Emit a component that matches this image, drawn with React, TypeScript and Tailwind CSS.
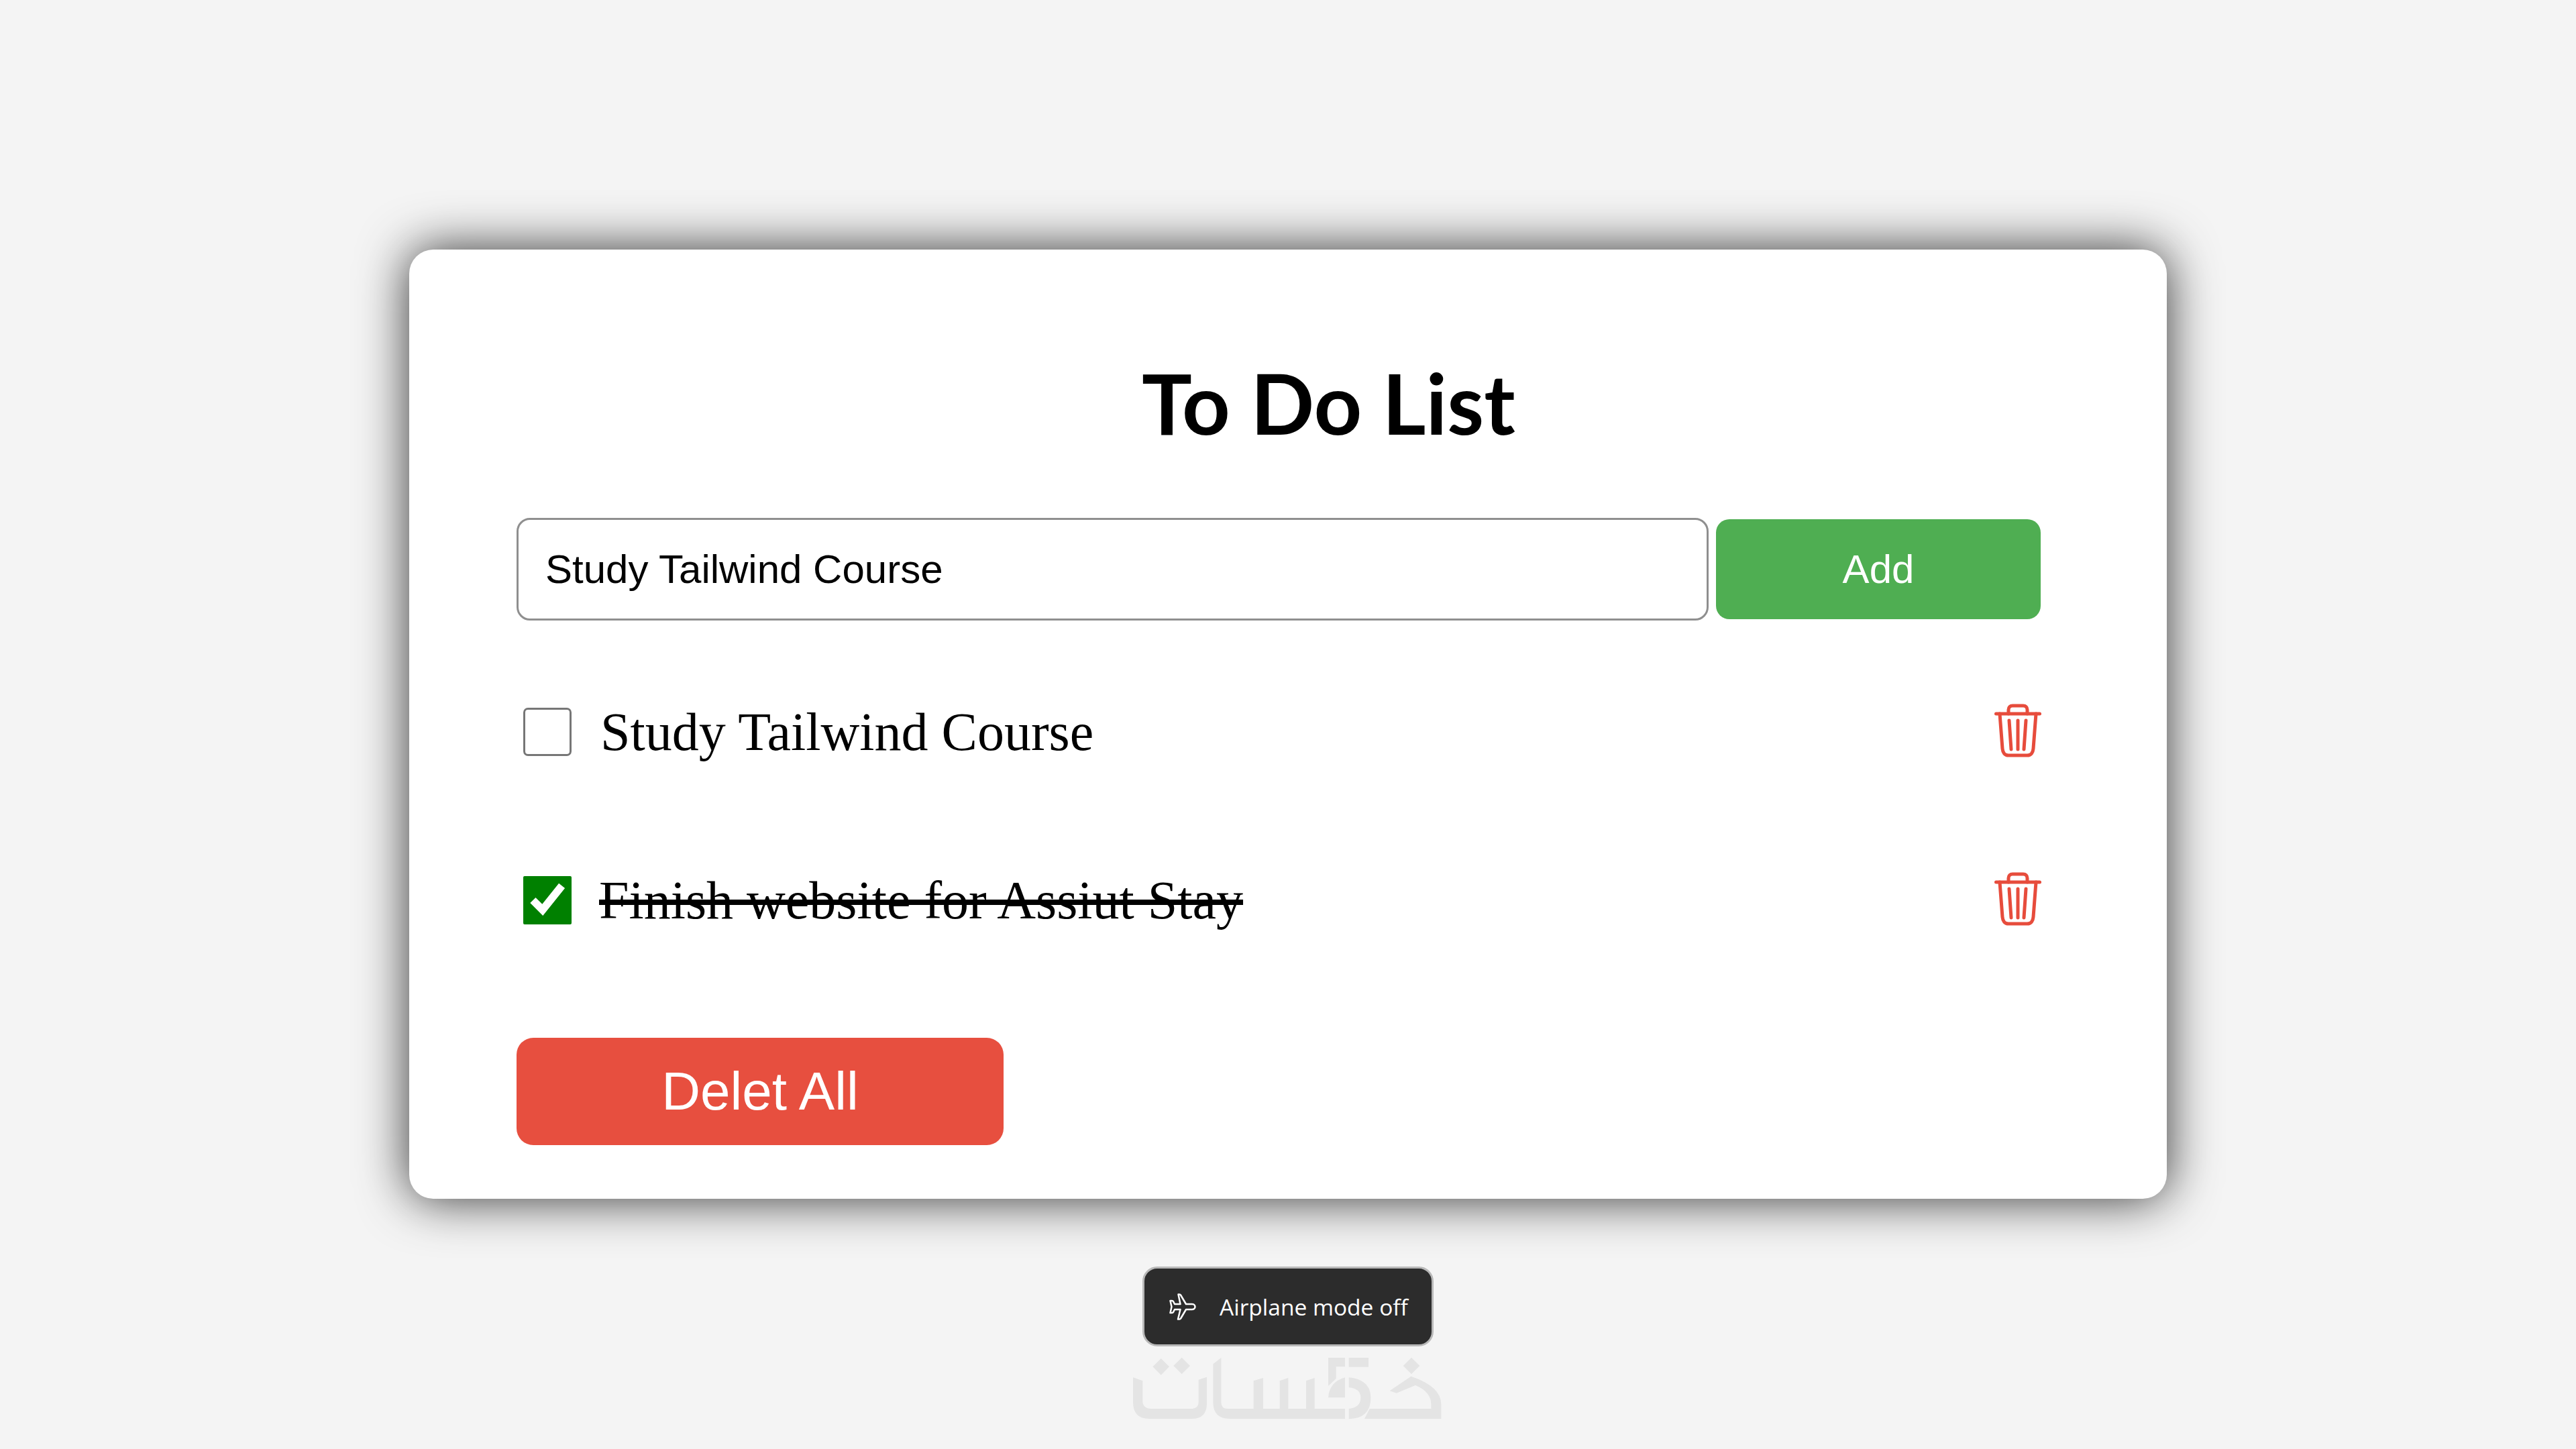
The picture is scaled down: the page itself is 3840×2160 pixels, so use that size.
import React from 'react';

function TrashIcon() {
  return (
    <svg viewBox="0 0 70 80" className="w-[70px] h-[80px]" fill="none" stroke="#e74c3c" strokeWidth="5" strokeLinecap="round" strokeLinejoin="round">
      <path d="M2.5 15H67.5" />
      <path d="M21 15V9C21 5 23.5 3 27 3H43C46.5 3 49 5 49 9V15" />
      <path d="M8 15L12 67C12.5 73 15.5 77 21 77H49C54.500 77 57.500 73 58 67L62 15" />
      <path d="M22 25L25 68" />
      <path d="M35 25V68" />
      <path d="M47 25L44 68" />
    </svg>
  );
}

function PlaneIcon() {
  return (
    <svg viewBox="0 0 40 40" className="w-10 h-10" fill="none" stroke="white" strokeWidth="2.500" strokeLinejoin="round">
      <path d="M34 16H25L17 2.500Q16.500 1.500 15 1.500H13.500L16.500 16H8L6 12Q5.500 11 4 11H1.500L3.500 20L1.500 29H4Q5.500 29 6 28L8 24H16.500L13 38.500H15Q16.500 38.500 17 37.500L25 24H34C36.500 24 38.500 22 38.500 20C38.500 18 36.500 16 34 16Z" />
    </svg>
  );
}

function Logo() {
  return (
    <svg viewBox="0 0 1440 780" className="absolute left-[1680px] top-[1880px] w-[480px] h-[260px]" fill="#e4e4e4">
      <path d="M115 472L152 435L189 472L152 509Z" />
      <path d="M208 468L245 431L282 468L245 505Z" />
      <path d="M27 520L70 535V625Q70 660 110 660H285Q320 660 320 630V530L357 518V640Q355 705 290 705H100Q27 705 27 630Z" />
      <path d="M385 460L421 432V630Q421 660 450 660H566V535L609 522V660H683V535L721 522V660H801V535L839 522V660H975V705H460Q385 705 385 630Z" />
      <path d="M900 432H975V472H935V525L900 558Z" />
      <path d="M900 610Q905 540 975 520V610Z" />
      <path d="M992 432H1080V473H992Z" />
      <path d="M992 520Q1090 530 1090 610Q1090 700 1000 705H992V660Q1045 655 1045 610Q1045 570 992 565Z" />
      <path d="M1235 468L1272 431L1309 468L1272 505Z" />
      <path d="M1175 580L1270 515Q1405 560 1405 640V705H1062L1085 660H1360V640Q1360 585 1290 555L1205 590Z" />
    </svg>
  );
}

export default function App() {
  return (
    <div className="relative w-[3840px] h-[2160px] overflow-hidden bg-[#f4f4f4] pt-[372px]" style={{ fontFamily: '"Liberation Sans", sans-serif' }}>
      <div className="mx-auto w-[2620px] h-[1415px] rounded-[36px] bg-white pl-[160px] pr-[188px] pt-[163px] shadow-[0_0_75px_rgba(0,0,0,0.8)]">
        <h1 className="ml-[932px] whitespace-nowrap text-[125px] leading-[130px] font-bold text-black [font-family:'Lato',sans-serif]">To Do List</h1>

        <div className="mt-[107px] flex items-center gap-[11px]">
          <input
            type="text"
            defaultValue="Study Tailwind Course"
            className="h-[153px] w-[1777px] rounded-[20px] border-[3px] border-[#8f8f8f] pl-[40px] text-[60px] text-black outline-none"
          />
          <button className="h-[149px] w-[484px] rounded-[20px] bg-[#4fae52] text-[60px] text-white">Add</button>
        </div>

        <ul className="mt-[130px] [font-family:'Liberation_Serif',serif]">
          <li className="flex h-[72px] items-center justify-between">
            <div className="flex items-center">
              <input type="checkbox" className="m-0 ml-[10px] h-[72px] w-[72px] appearance-none rounded-[7px] border-[3px] border-[#767676] bg-white" />
              <span className="ml-[43px] text-[80px] leading-[80px] text-black">Study Tailwind Course</span>
            </div>
            <div className="-mt-[5px] translate-x-[1px]"><TrashIcon /></div>
          </li>
          <li className="mt-[179px] flex h-[72px] items-center justify-between">
            <div className="flex items-center">
              <input type="checkbox" defaultChecked className="m-0 ml-[10px] h-[72px] w-[72px] accent-[#008000]" />
              <span className="ml-[41px] text-[80px] leading-[80px] text-black line-through">Finish website for Assiut Stay</span>
            </div>
            <div className="-mt-[5px] translate-x-[1px]"><TrashIcon /></div>
          </li>
        </ul>

        <button className="mt-[169px] h-[160px] w-[726px] rounded-[25px] bg-[#e74f3f] text-[80px] text-white">Delet All</button>
      </div>

      <Logo />

      <div className="absolute left-[1703px] top-[1888px] flex h-[119px] w-[434px] items-center rounded-[22px] border-[3px] border-[#b8b8b8] bg-[#2c2c2c] pl-[37px] [font-family:'Open_Sans',sans-serif]">
        <PlaneIcon />
        <span className="ml-[35px] mt-[2px] whitespace-nowrap text-[33.5px] text-white">Airplane mode off</span>
      </div>
    </div>
  );
}
